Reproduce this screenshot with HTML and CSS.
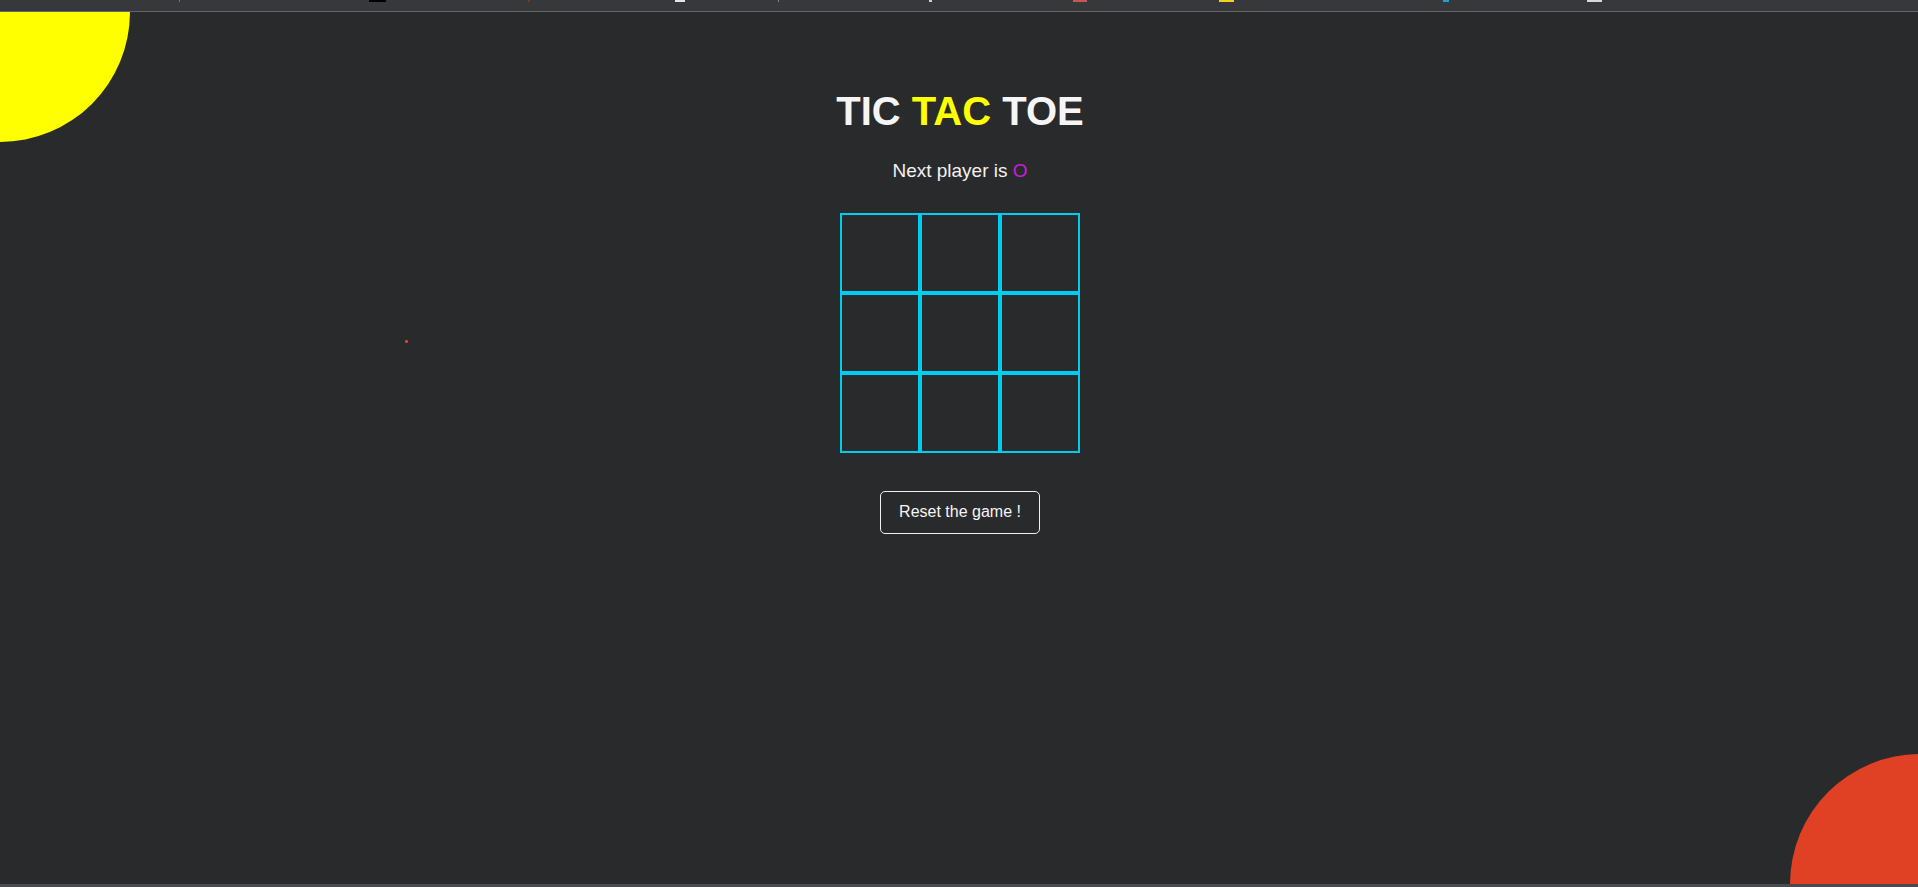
FILE: index.html
```html
<!DOCTYPE html>
<html lang="en">
<head>
<meta charset="utf-8">
<title>Tic Tac Toe</title>
<link rel="stylesheet" href="styles.css">
</head>
<body>
<div class="topbar">
  <span class="fav fav-1"></span>
  <span class="fav fav-2"></span>
  <span class="fav fav-3"></span>
  <span class="fav fav-4"></span>
  <span class="fav fav-5"></span>
  <span class="fav fav-6"></span>
  <span class="fav fav-7"></span>
  <span class="fav fav-8"></span>
  <span class="fav fav-9"></span>
  <span class="fav fav-10"></span>
</div>
<main class="stage">
  <div class="blob blob-yellow"></div>
  <div class="blob blob-red"></div>
  <div class="dot"></div>
  <section class="game">
    <h1 class="title">TIC <span class="accent">TAC</span> TOE</h1>
    <p class="status">Next player is <span class="player-o">O</span></p>
    <div class="board">
      <div class="cell"></div><div class="cell"></div><div class="cell"></div>
      <div class="cell"></div><div class="cell"></div><div class="cell"></div>
      <div class="cell"></div><div class="cell"></div><div class="cell"></div>
    </div>
    <button class="reset" type="button">Reset the game !</button>
  </section>
</main>
<div class="bottombar"></div>
</body>
</html>
```

FILE: styles.css
```css
* { box-sizing: border-box; }

html, body {
  margin: 0;
  padding: 0;
  height: 887px;
  overflow: hidden;
  background: #292a2c;
  font-family: "Liberation Sans", Arial, sans-serif;
}

body {
  display: flex;
  flex-direction: column;
}

.topbar {
  height: 12px;
  flex: none;
  background: #37383c;
  border-bottom: 1px solid #636466;
  display: flex;
  align-items: flex-start;
}

.fav { height: 2px; flex: none; }
.fav-1 { width: 1px; margin-left: 179px; background: #777; }
.fav-2 { width: 17px; margin-left: 189px; background: #000; }
.fav-3 { width: 2px; margin-left: 142px; background: #7a3b1c; }
.fav-4 { width: 10px; margin-left: 145px; background: #e6e6e6; }
.fav-5 { width: 1px; margin-left: 93px; background: #888; }
.fav-6 { width: 3px; margin-left: 150px; background: #cccccc; }
.fav-7 { width: 14px; margin-left: 141px; background: #c25a52; }
.fav-8 { width: 15px; margin-left: 132px; background: #f2d21c; }
.fav-9 { width: 6px; margin-left: 209px; background: #1ba3d6; }
.fav-10 { width: 15px; margin-left: 138px; background: #d8d8d8; }

.stage {
  flex: 1;
  position: relative;
  overflow: hidden;
}

.blob {
  position: absolute;
  width: 260px;
  height: 260px;
  border-radius: 50%;
}

.blob-yellow {
  background: #ffff00;
  left: -130px;
  top: -130px;
}

.blob-red {
  background: #e04024;
  right: -132px;
  bottom: -130px;
}

.dot {
  position: absolute;
  left: 405px;
  top: 328px;
  width: 3px;
  height: 3px;
  background: #e04024;
  border-radius: 1px;
}

.game {
  display: flex;
  flex-direction: column;
  align-items: center;
  padding-top: 77px;
  padding-left: 2px;
}

.title {
  margin: 0;
  font-size: 40px;
  line-height: 45px;
  font-weight: bold;
  color: #f5f5f5;
}

.accent { color: #ffff00; }

.status {
  margin: 26px 0 0;
  font-size: 19px;
  line-height: 22px;
  color: #f2f2f2;
}

.player-o { color: #c81ed8; }

.board {
  margin-top: 31px;
  display: grid;
  grid-template-columns: repeat(3, 80px);
  grid-template-rows: repeat(3, 80px);
}

.cell {
  border: 2px solid #00cdf0;
}

.reset {
  margin-top: 38px;
  padding: 11px 18px 12px;
  font-family: "Liberation Sans", Arial, sans-serif;
  font-size: 16px;
  line-height: 18px;
  color: #f5f5f5;
  background: transparent;
  border: 1px solid #f0f0f0;
  border-radius: 5px;
  cursor: pointer;
}

.bottombar {
  height: 3px;
  flex: none;
  background: #4a4b4e;
}
```
